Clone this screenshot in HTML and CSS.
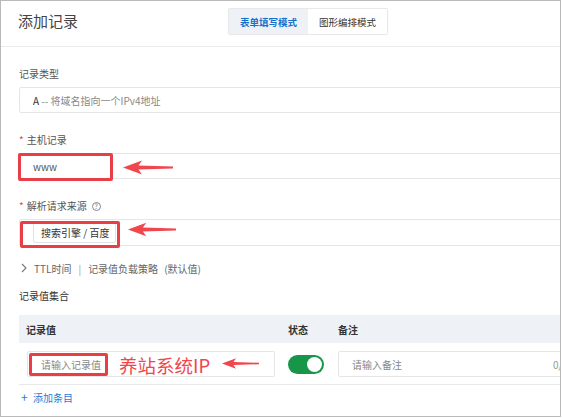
FILE: index.html
```html
<!DOCTYPE html>
<html lang="zh-CN">
<head>
<meta charset="utf-8">
<title>添加记录</title>
<link rel="stylesheet" href="styles.css">
</head>
<body>
<div class="frame">
  <header class="head">
    <h1 class="title">添加记录</h1>
    <div class="seg">
      <span class="seg-item active">表单填写模式</span>
      <span class="seg-item">图形编排模式</span>
    </div>
  </header>
  <main class="content">
    <div class="field">
      <div class="label">记录类型</div>
      <div class="input"><span class="strong">A</span>&nbsp;<span class="muted">-- 将域名指向一个IPv4地址</span></div>
    </div>
    <div class="field">
      <div class="label"><span class="req">*</span> 主机记录</div>
      <div class="input anno">
        <span class="value">www</span>
        <span class="redbox box-host"></span>
        <svg class="arrow arrow-host" viewBox="0 0 50 14" width="50" height="15"><polygon points="0,7 19,0 15.5,5 50,6 50,8 15.5,9 19,14"/></svg>
      </div>
    </div>
    <div class="field">
      <div class="label"><span class="req">*</span> 解析请求来源 <span class="help">?</span></div>
      <div class="input input-tag anno">
        <span class="tag">搜索引擎 / 百度</span>
        <span class="redbox box-src"></span>
        <svg class="arrow arrow-src" viewBox="0 0 50 14" width="48" height="15"><polygon points="0,7 19,0 15.5,5 50,6 50,8 15.5,9 19,14"/></svg>
      </div>
    </div>
    <div class="more">
      <svg class="chev" viewBox="0 0 6 10" width="6" height="10"><polyline points="1,1 5,5 1,9" fill="none" stroke="#777" stroke-width="1.1"/></svg>
      <span>TTL时间</span><span class="sep">|</span><span>记录值负载策略</span><span class="def">(默认值)</span>
    </div>
    <div class="section">记录值集合</div>
    <div class="table">
      <div class="trow thead">
        <div class="th th-first">记录值</div>
        <div class="th">状态</div>
        <div class="th">备注</div>
      </div>
      <div class="trow tbody">
        <div class="td td-first">
          <div class="input small anno">
            <span class="ph">请输入记录值</span>
            <span class="redbox box-val"></span>
            <span class="note">养站系统IP</span>
            <svg class="arrow arrow-val" viewBox="0 0 50 14" width="37" height="11"><polygon points="0,7 19,0 15.5,5 50,6 50,8 15.5,9 19,14"/></svg>
          </div>
        </div>
        <div class="td">
          <span class="switch"><span class="knob"></span></span>
        </div>
        <div class="td">
          <div class="input remark"><span class="ph">请输入备注</span><span class="count">0/</span></div>
        </div>
      </div>
    </div>
    <div class="add"><span class="plus">+</span> 添加条目</div>
  </main>
</div>
</body>
</html>
```

FILE: styles.css
```css
* { box-sizing: border-box; }
html, body { margin: 0; padding: 0; background: #fff; }
body {
  font-family: "Noto Sans CJK SC", "Noto Sans", "Liberation Sans", sans-serif;
  color: #333;
  width: 562px;
  height: 418px;
  overflow: hidden;
}
.frame {
  width: 561px;
  height: 417px;
  border: 1px solid #b9b9b9;
  overflow: hidden;
  background: #fff;
}
.head {
  display: flex;
  align-items: flex-start;
  height: 46px;
  padding: 7px 0 0 17px;
  border-bottom: 1px solid #ebebeb;
}
.title {
  margin: 0;
  width: 210px;
  font-size: 15px;
  line-height: 25px;
  font-weight: normal;
  color: #444;
}
.seg {
  display: flex;
  height: 27px;
  border: 1px solid #e8e8e8;
  border-radius: 2px;
  box-shadow: 0 0 1px rgba(0,0,0,0.06);
}
.seg-item {
  width: 79px;
  display: flex;
  align-items: center;
  justify-content: center;
  font-size: 9.5px;
  color: #333;
  background: #fff;
}
.seg-item.active {
  background: #eef2f7;
  color: #1a6fc9;
  font-weight: bold;
}
.content { padding: 0 0 0 18px; }
.field { margin-top: 20px; }
.field + .field { margin-top: 20px; }
.label {
  font-size: 10px;
  line-height: 14px;
  height: 14px;
  color: #555;
  margin-bottom: 6px;
  display: flex;
  align-items: center;
}
.req { color: #e5484d; margin-right: 3px; }
.help {
  display: inline-flex;
  width: 9px;
  height: 9px;
  margin-left: 5px;
  border: 1px solid #888;
  border-radius: 50%;
  font-size: 7px;
  line-height: 1;
  align-items: center;
  justify-content: center;
  color: #777;
}
.input {
  position: relative;
  width: 620px;
  height: 26px;
  border: 1px solid #e6e6e6;
  border-radius: 2px;
  display: flex;
  align-items: center;
  padding-left: 13px;
  font-size: 10px;
  color: #333;
  background: #fff;
}
.strong { color: #333; }
.muted { color: #888; }
.value { color: #555; }
.input-tag { height: 27px; }
.tag {
  display: inline-flex;
  align-items: center;
  height: 21px;
  padding: 0 6px 0 7px;
  border: 1px solid #e2e2e2;
  border-radius: 2px;
  font-size: 10px;
  color: #333;
}
.redbox {
  position: absolute;
  border: 3px solid #ea3e47;
  border-radius: 2px;
}
.box-host { left: -2px; top: -1px; width: 95px; height: 28px; }
.box-src { left: 0; top: 1px; width: 100px; height: 27px; }
.box-val { left: 1px; top: 1px; width: 79px; height: 23px; }
.arrow { position: absolute; fill: #f0474f; }
.arrow-host { left: 103px; top: 6px; }
.arrow-src { left: 108px; top: 2px; }
.arrow-val { left: 194px; top: 6px; }
.note {
  position: absolute;
  left: 91px;
  top: 0;
  font-size: 18.5px;
  line-height: 26px;
  color: #f0464c;
  white-space: nowrap;
}
.more {
  display: flex;
  align-items: center;
  margin-top: 15px;
  height: 14px;
  font-size: 10px;
  color: #666;
}
.chev { margin: 0 7px 0 2px; }
.sep { margin: 0 7px; color: #999; }
.def { margin-left: 6px; }
.section {
  margin-top: 14px;
  font-size: 10px;
  line-height: 14px;
  color: #333;
}
.table { margin-top: 12px; width: 620px; }
.trow {
  display: grid;
  grid-template-columns: 269px 50px 301px;
}
.thead {
  height: 28px;
  background: #eef1f6;
  align-items: center;
}
.th {
  font-size: 10px;
  font-weight: bold;
  color: #333;
}
.th-first { padding-left: 7px; }
.tbody {
  padding: 8px 0 7px;
  border-bottom: 1px solid #e8e8e8;
  align-items: center;
}
.td-first { padding-left: 8px; }
.input.small { width: 248px; }
.ph { color: #888; font-size: 10px; }
.switch {
  display: block;
  width: 36px;
  height: 19px;
  border-radius: 10px;
  background: #17964a;
  position: relative;
}
.knob {
  position: absolute;
  right: 2px;
  top: 2px;
  width: 15px;
  height: 15px;
  border-radius: 50%;
  background: #fff;
}
.remark { width: 300px; }
.count {
  position: absolute;
  left: 214px;
  color: #999;
  font-size: 10px;
}
.add {
  margin-top: 5px;
  font-size: 10px;
  line-height: 14px;
  color: #2d7ad6;
  padding-left: 2px;
}
.plus { font-size: 12px; margin-right: 3px; }
```
